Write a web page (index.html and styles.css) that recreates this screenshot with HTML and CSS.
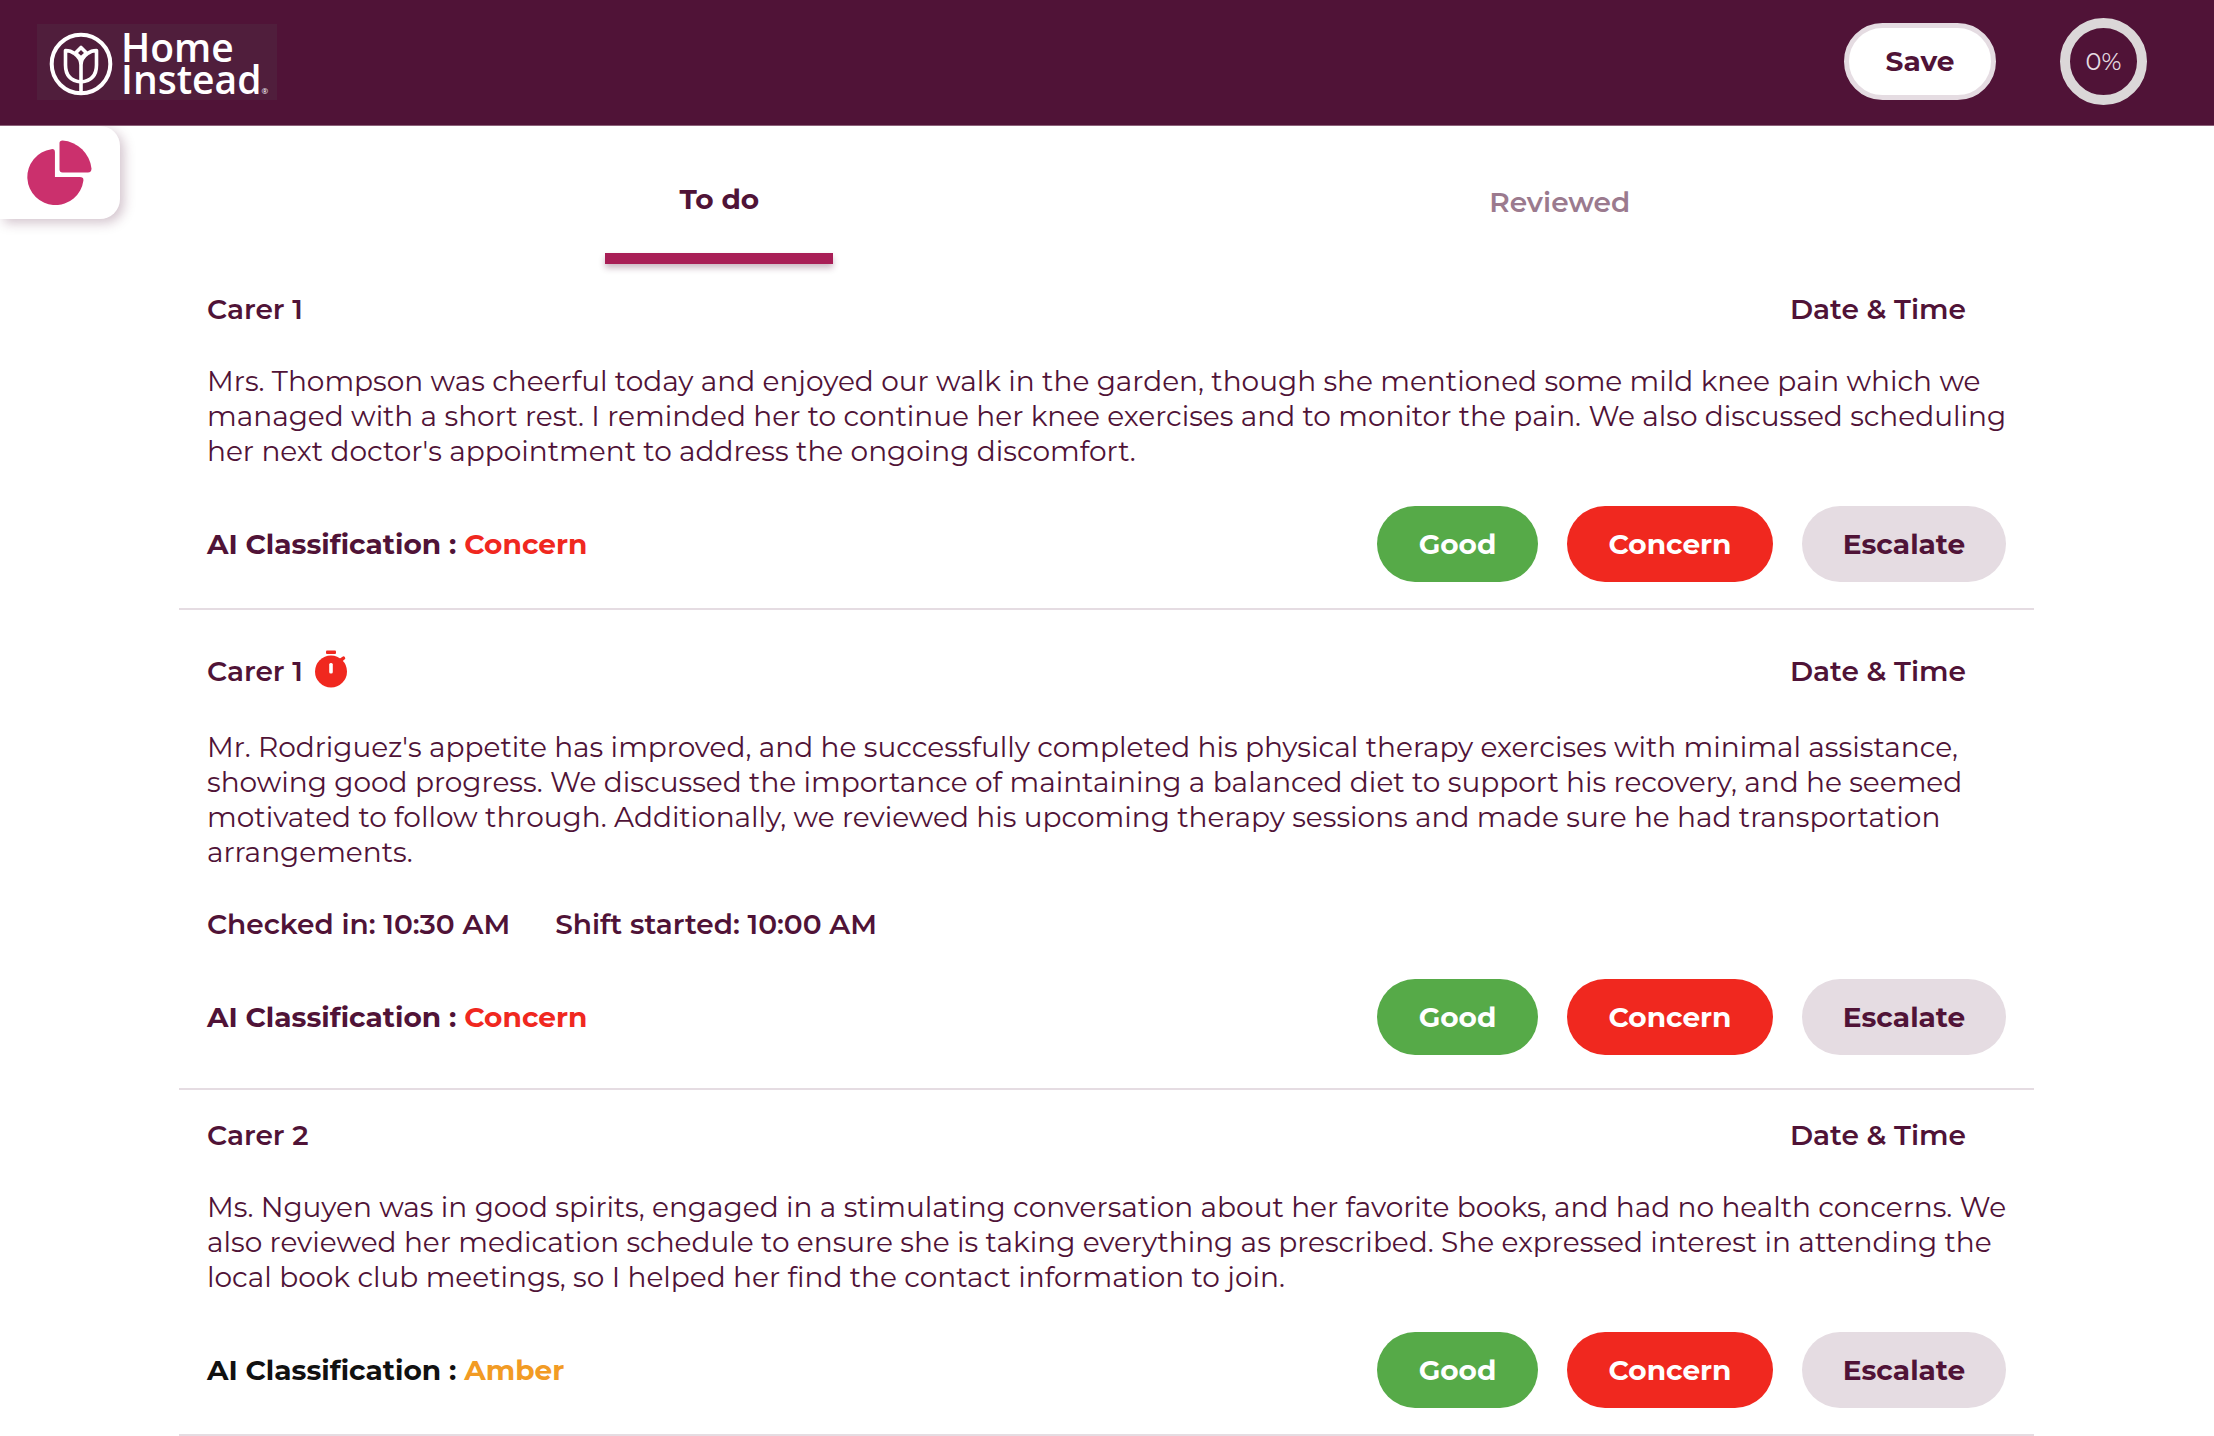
FILE: index.html
```html
<!DOCTYPE html>
<html lang="en">
<head>
<meta charset="utf-8">
<meta name="viewport" content="width=device-width, initial-scale=1">
<title>Home Instead</title>
<link rel="stylesheet" href="styles.css">
</head>

<body>
	<header class="topbar">
		<a class="logo" href="#">
			<svg class="logo-mark" viewBox="0 0 64 64" fill="none" stroke="#fff" stroke-width="4" stroke-linejoin="round">
				<circle cx="32" cy="32" r="29.3"/>
				<path d="M32 61V33M32 50C22 49 16.500 43 16.500 33V18.500C20 18.500 23 19.500 25.500 21.500M32 50C42 49 47.500 43 47.500 33V18.500C44 18.500 41 19.500 38.500 21.500M25.500 21.500C29 24 32 28 32 33M38.500 21.500C35 24 32 28 32 33M26.500 21L32 15.500L37.500 21L32 26Z" stroke-width="3.600"/>
			</svg>
			<span class="logo-name">Home<br>Instead<small>®</small></span>
		</a>
		<button class="save" type="button">Save</button>
		<div class="progress">0%</div>
	</header>

	<!-- side drawer handle -->
	<button class="drawer" type="button" aria-label="Charts">
		<svg viewBox="0 0 64 64" fill="#cb306d">
			<path d="M27.500 36.500H52Q56 36.500 55.500 40A27.700 27.700 0 1 1 24 9Q27.500 8.500 27.500 12Z"/>
			<path d="M32 3Q32 0.500 35 0.500A31 31 0 0 1 63.500 28Q63.500 32 60 32H35Q32 32 32 29Z"/>
		</svg>
	</button>

	<nav class="tabs">
		<a class="tab active" href="#todo">To do</a>
		<a class="tab" href="#reviewed">Reviewed</a>
	</nav>

	<main class="list">
		<article class="entry">
			<div class="entry-head"><h2>Carer 1</h2><span>Date &amp; Time</span></div>
			<p>Mrs. Thompson was cheerful today and enjoyed our walk in the garden, though she mentioned some mild knee pain which we managed with a short rest. I reminded her to continue her knee exercises and to monitor the pain. We also discussed scheduling her next doctor's appointment to address the ongoing discomfort.</p>
			<div class="entry-foot">
				<div class="class">AI Classification : <span class="red">Concern</span></div>
				<div class="actions">
					<button class="btn good" type="button">Good</button>
					<button class="btn concern" type="button">Concern</button>
					<button class="btn escalate" type="button">Escalate</button>
				</div>
			</div>
		</article>

		<article class="entry late">
			<div class="entry-head">
				<h2>Carer 1</h2>
				<svg class="timer" viewBox="0 0 32 38" fill="#f0281f">
					<rect x="11" y="0.500" width="10" height="3.500" rx="1"/>
					<path d="M26 10L28.500 8.200" stroke="#f0281f" stroke-width="3.500" stroke-linecap="round"/>
					<circle cx="16" cy="21.500" r="16"/>
					<rect x="14.200" y="13" width="3.600" height="10.500" rx="1.500" fill="#fff"/>
				</svg>
				<span>Date &amp; Time</span>
			</div>
			<p>Mr. Rodriguez's appetite has improved, and he successfully completed his physical therapy exercises with minimal assistance, showing good progress. We discussed the importance of maintaining a balanced diet to support his recovery, and he seemed motivated to follow through. Additionally, we reviewed his upcoming therapy sessions and made sure he had transportation arrangements.</p>
			<div class="times"><span>Checked in: 10:30 AM</span><span>Shift started: 10:00 AM</span></div>
			<div class="entry-foot">
				<div class="class">AI Classification : <span class="red">Concern</span></div>
				<div class="actions">
					<button class="btn good" type="button">Good</button>
					<button class="btn concern" type="button">Concern</button>
					<button class="btn escalate" type="button">Escalate</button>
				</div>
			</div>
		</article>

		<article class="entry">
			<div class="entry-head"><h2>Carer 2</h2><span>Date &amp; Time</span></div>
			<p>Ms. Nguyen was in good spirits, engaged in a stimulating conversation about her favorite books, and had no health concerns. We also reviewed her medication schedule to ensure she is taking everything as prescribed. She expressed interest in attending the local book club meetings, so I helped her find the contact information to join.</p>
			<div class="entry-foot">
				<div class="class black">AI Classification : <span class="amber">Amber</span></div>
				<div class="actions">
					<button class="btn good" type="button">Good</button>
					<button class="btn concern" type="button">Concern</button>
					<button class="btn escalate" type="button">Escalate</button>
				</div>
			</div>
		</article>
	</main>
</body>
</html>
```

FILE: styles.css
```css
*{
	box-sizing:border-box;
}

body,h2,p{
	margin:0;
}

body{
	background:#fff;
	color:#501337;
	font-family:Montserrat,Inter,sans-serif;
	font-size:28px;
	line-height:35px;
}

button{
	font:inherit;
	color:inherit;
	border:0;
	cursor:pointer;
}

a{
	color:inherit;
	text-decoration:none;
}

.topbar{
	display:flex;
	align-items:center;
	height:126px;
	padding:0 67px 2px 37px;
	background:#501337;
	border-bottom:1px solid #8c6179;
}

.logo{
	display:flex;
	align-items:center;
	gap:8px;
	height:76px;
	padding:5px 9px 0 12px;
	background:#501e3c;
	color:#fff;
}

.logo-mark{
	width:64px;
	height:64px;
}

.logo-name{
	padding-top:10px;
	font-family:"Open Sans",sans-serif;
	font-size:39px;
	font-weight:600;
	line-height:32px;
}

.logo-name small{
	font-size:8px;
	font-weight:400;
}

.save{
	margin-left:auto;
	width:152px;
	height:77px;
	border:5px solid #e5dce2;
	border-radius:39px;
	background:#fff;
	font-weight:700;
}

.progress{
	display:flex;
	align-items:center;
	justify-content:center;
	width:87px;
	height:87px;
	margin-left:64px;
	border:10px solid #dbd7d8;
	border-radius:50%;
	color:#e5dce2;
	font-size:24px;
}

/* hangs from the bar over the page */
.drawer{
	position:absolute;
	left:0;
	top:126px;
	width:120px;
	height:93px;
	padding:0 0 0 27px;
	background:#fff;
	border-radius:0 20px 20px 0;
	box-shadow:4px 4px 12px rgba(80,19,55,.25);
	clip-path:inset(0 -30px -30px 0);
	text-align:left;
}

.drawer svg{
	display:block;
	width:65px;
	height:65px;
}

.tabs{
	display:flex;
	height:138px;
	padding:0 234px 0 299px;
}

.tab{
	flex:1;
	display:flex;
	flex-direction:column;
	align-items:center;
	padding-top:59px;
	color:#9b7a8e;
	font-weight:600;
}

.tab.active{
	padding-top:56px;
	color:#501337;
	font-weight:700;
}

.tab.active::after{
	content:"";
	width:228px;
	height:11px;
	margin-top:auto;
	background:#a81e56;
	box-shadow:0 4px 6px rgba(80,19,55,.3);
}

.list{
	margin:0 180px 0 179px;
}

.entry{
	display:flex;
	flex-direction:column;
	gap:37px;
	padding:28px 28px 26px;
	border-bottom:2px solid #e5dce2;
}

.entry.late{
	padding:40px 28px 33px;
}

.entry-head{
	display:flex;
	align-items:center;
	gap:12px;
	padding-right:40px;
	font-weight:600;
}

.entry.late .entry-head{
	height:43px;
}

.entry-head h2{
	font-size:28px;
	font-weight:600;
}

.entry-head span{
	margin-left:auto;
}

.entry p{
	margin-right:-10px;
}

.timer{
	align-self:flex-start;
	width:32px;
	height:38px;
}

.times{
	display:flex;
	gap:45px;
	font-weight:600;
}

.entry-foot{
	display:flex;
	align-items:center;
	justify-content:space-between;
}

.class{
	font-weight:700;
}

.black{
	color:#111;
}

.red{
	color:#f0281f;
}

.amber{
	color:#f29b24;
}

.actions{
	display:flex;
	gap:29px;
}

.btn{
	height:76px;
	border-radius:38px;
	font-weight:700;
}

.good{
	width:161px;
	background:#56aa48;
	color:#fff;
}

.concern{
	width:206px;
	background:#f0281f;
	color:#fff;
}

.escalate{
	width:204px;
	background:#e5dce2;
}
```
